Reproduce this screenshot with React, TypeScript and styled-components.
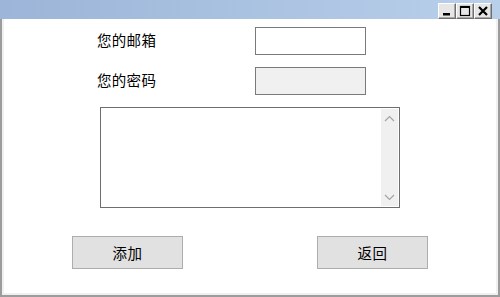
import React from 'react';
import styled, { createGlobalStyle } from 'styled-components';

const GlobalStyle = createGlobalStyle`
  html, body {
    margin: 0;
    padding: 0;
    background: #ffffff;
    font-family: "Noto Sans CJK SC", "Noto Sans", sans-serif;
  }
  * { box-sizing: border-box; }
`;

// Window frame
const Window = styled.div`
  width: 500px;
  height: 297px;
  display: flex;
  flex-direction: column;
  overflow: hidden;
`;

const TitleBar = styled.div`
  height: 19px;
  flex: none;
  display: flex;
  align-items: flex-start;
  justify-content: flex-end;
  padding: 3px 8px 0 0;
  background: linear-gradient(to right, #9cb5d8, #b8d0ea);
`;

const CaptionButton = styled.button`
  width: 18px;
  height: 16px;
  padding: 0;
  margin: 0;
  display: flex;
  align-items: center;
  justify-content: center;
  background: #e6e6e6;
  border: 1px solid;
  border-color: #ffffff #6f6f6f #6f6f6f #ffffff;
  box-shadow: inset -1px -1px 0 #a8a8a8;
`;

const Frame = styled.div`
  flex: 1;
  display: flex;
  border: 2px solid #9c9c9c;
  border-top: none;
`;

const Body = styled.div`
  flex: 1;
  display: flex;
  flex-direction: column;
  background: #ffffff;
  border: 2px solid #f0f0f0;
  border-top: none;
  padding-top: 8px;
`;

// Form
const Row = styled.div`
  display: flex;
  align-items: center;
  height: 28px;
  padding-left: 93px;
  margin-bottom: 12px;
`;

const Label = styled.span`
  width: 158px;
  font-size: 14.5px;
  line-height: 20px;
  margin-top: -2px;
  color: #000000;
  letter-spacing: 0.3px;
`;

const Field = styled.input<{ $disabled?: boolean }>`
  width: 111px;
  height: 28px;
  margin: 0;
  padding: 0 4px;
  border: 1px solid #7a7a7a;
  outline: none;
  background: ${p => (p.$disabled ? '#f0f0f0' : '#ffffff')};
  font-family: inherit;
  font-size: 13px;
`;

const TextBox = styled.div`
  margin: 0 0 28px 96px;
  width: 300px;
  height: 101px;
  display: flex;
  border: 1px solid #6e6e6e;
  background: #ffffff;
`;

const TextArea = styled.div`
  flex: 1;
`;

const ScrollBar = styled.div`
  width: 17px;
  margin: 1px 1px 1px 0;
  display: flex;
  flex-direction: column;
  justify-content: space-between;
  align-items: center;
  padding: 6px 0 5px;
  background: #f0f0f0;
`;

const Actions = styled.div`
  display: flex;
  padding-left: 68px;
  gap: 134px;
`;

const Button = styled.button`
  width: 111px;
  height: 33px;
  margin: 0;
  padding: 0;
  background: #e1e1e1;
  border: 1px solid #adadad;
  font-family: inherit;
  font-size: 14.5px;
  color: #000000;
  letter-spacing: 0.5px;
`;

const Chevron = ({ up }: { up?: boolean }) => (
  <svg width="11" height="7" viewBox="0 0 11 7">
    <path
      d={up ? 'M1 6 L5.5 1.5 L10 6' : 'M1 1 L5.5 5.5 L10 1'}
      fill="none"
      stroke="#a3a3a3"
      strokeWidth="1.2"
    />
  </svg>
);

export default function App() {
  return (
    <Window>
      <GlobalStyle />
      <TitleBar>
        <CaptionButton aria-label="minimize">
          <svg width="12" height="12" viewBox="0 0 12 12">
            <rect x="2" y="8" width="7" height="2.5" fill="#000" />
          </svg>
        </CaptionButton>
        <CaptionButton aria-label="maximize">
          <svg width="12" height="12" viewBox="0 0 12 12">
            <rect x="1.5" y="1.5" width="9" height="9" fill="none" stroke="#000" strokeWidth="1.2" />
            <rect x="1" y="1" width="10" height="2" fill="#000" />
          </svg>
        </CaptionButton>
        <CaptionButton aria-label="close">
          <svg width="12" height="12" viewBox="0 0 12 12">
            <path d="M2 2 L10 10 M10 2 L2 10" stroke="#000" strokeWidth="2.2" />
          </svg>
        </CaptionButton>
      </TitleBar>
      <Frame>
        <Body>
          <Row>
            <Label>您的邮箱</Label>
            <Field type="text" />
          </Row>
          <Row>
            <Label>您的密码</Label>
            <Field type="password" $disabled />
          </Row>
          <TextBox>
            <TextArea />
            <ScrollBar>
              <Chevron up />
              <Chevron />
            </ScrollBar>
          </TextBox>
          <Actions>
            <Button>添加</Button>
            <Button>返回</Button>
          </Actions>
        </Body>
      </Frame>
    </Window>
  );
}
